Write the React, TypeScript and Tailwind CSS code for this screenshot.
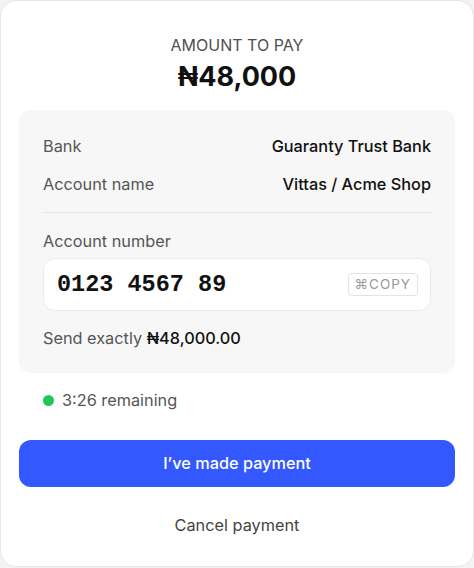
export default function App() {
  return (
    <div className="min-h-screen bg-[#f3f3f3]" style={{ fontFamily: "Inter, 'Noto Sans', sans-serif" }}>
      <div className="w-[474px] h-[567px] bg-white border border-[#e6e6e6] rounded-2xl px-[18px] pt-[34px]">
        {/* Amount */}
        <div className="text-center">
          <p className="text-[16px] leading-5 text-[#505050] uppercase">Amount to pay</p>
          <p className="mt-[5px] text-[27px] leading-[34px] font-bold text-[#111]">₦48,000</p>
        </div>

        {/* Bank details */}
        <div className="mt-[16px] bg-[#f7f7f7] rounded-xl px-6 pt-6 pb-[23px]">
          <div className="flex justify-between items-center text-[16.3px] leading-6">
            <span className="text-[#555]">Bank</span>
            <span className="text-[#111] font-medium">Guaranty Trust Bank</span>
          </div>
          <div className="mt-[14px] flex justify-between items-center text-[16.3px] leading-6">
            <span className="text-[#555]">Account name</span>
            <span className="text-[#111] font-medium">Vittas / Acme Shop</span>
          </div>
          <div className="mt-4 border-t border-[#e4e4e4]" />
          <p className="mt-4 text-[16.3px] leading-6 text-[#555]">Account number</p>
          <div className="mt-[5px] h-[53px] bg-white rounded-xl border border-[#ececec] flex items-center justify-between pl-[13px] pr-[12px]">
            <span
              className="text-[23.5px] font-bold text-[#111]"
              style={{ fontFamily: "'Liberation Mono', monospace" }}
            >
              0123 4567 89
            </span>
            <span className="h-[23px] px-[6px] flex items-center border border-[#e3e3e3] rounded text-[13.5px] tracking-[1px] text-[#9a9a9a]">
              ⌘COPY
            </span>
          </div>
          <p className="mt-[15px] text-[16.3px] leading-6 text-[#555]">
            Send exactly <span className="text-[#111] font-medium">₦48,000.00</span>
          </p>
        </div>

        {/* Timer */}
        <div className="mt-[15px] flex items-center gap-[8px] pl-6 text-[16.3px] leading-6 text-[#555]">
          <span className="w-[11px] h-[11px] rounded-full bg-[#22c55e]" />
          <span>3:26 remaining</span>
        </div>

        <button className="mt-[28px] w-full h-[47px] rounded-xl bg-[#3358ff] text-white text-[16.3px] font-medium">
          I’ve made payment
        </button>

        <button className="mt-[26px] w-full text-center text-[16.3px] leading-6 text-[#444]">
          Cancel payment
        </button>
      </div>
    </div>
  );
}
